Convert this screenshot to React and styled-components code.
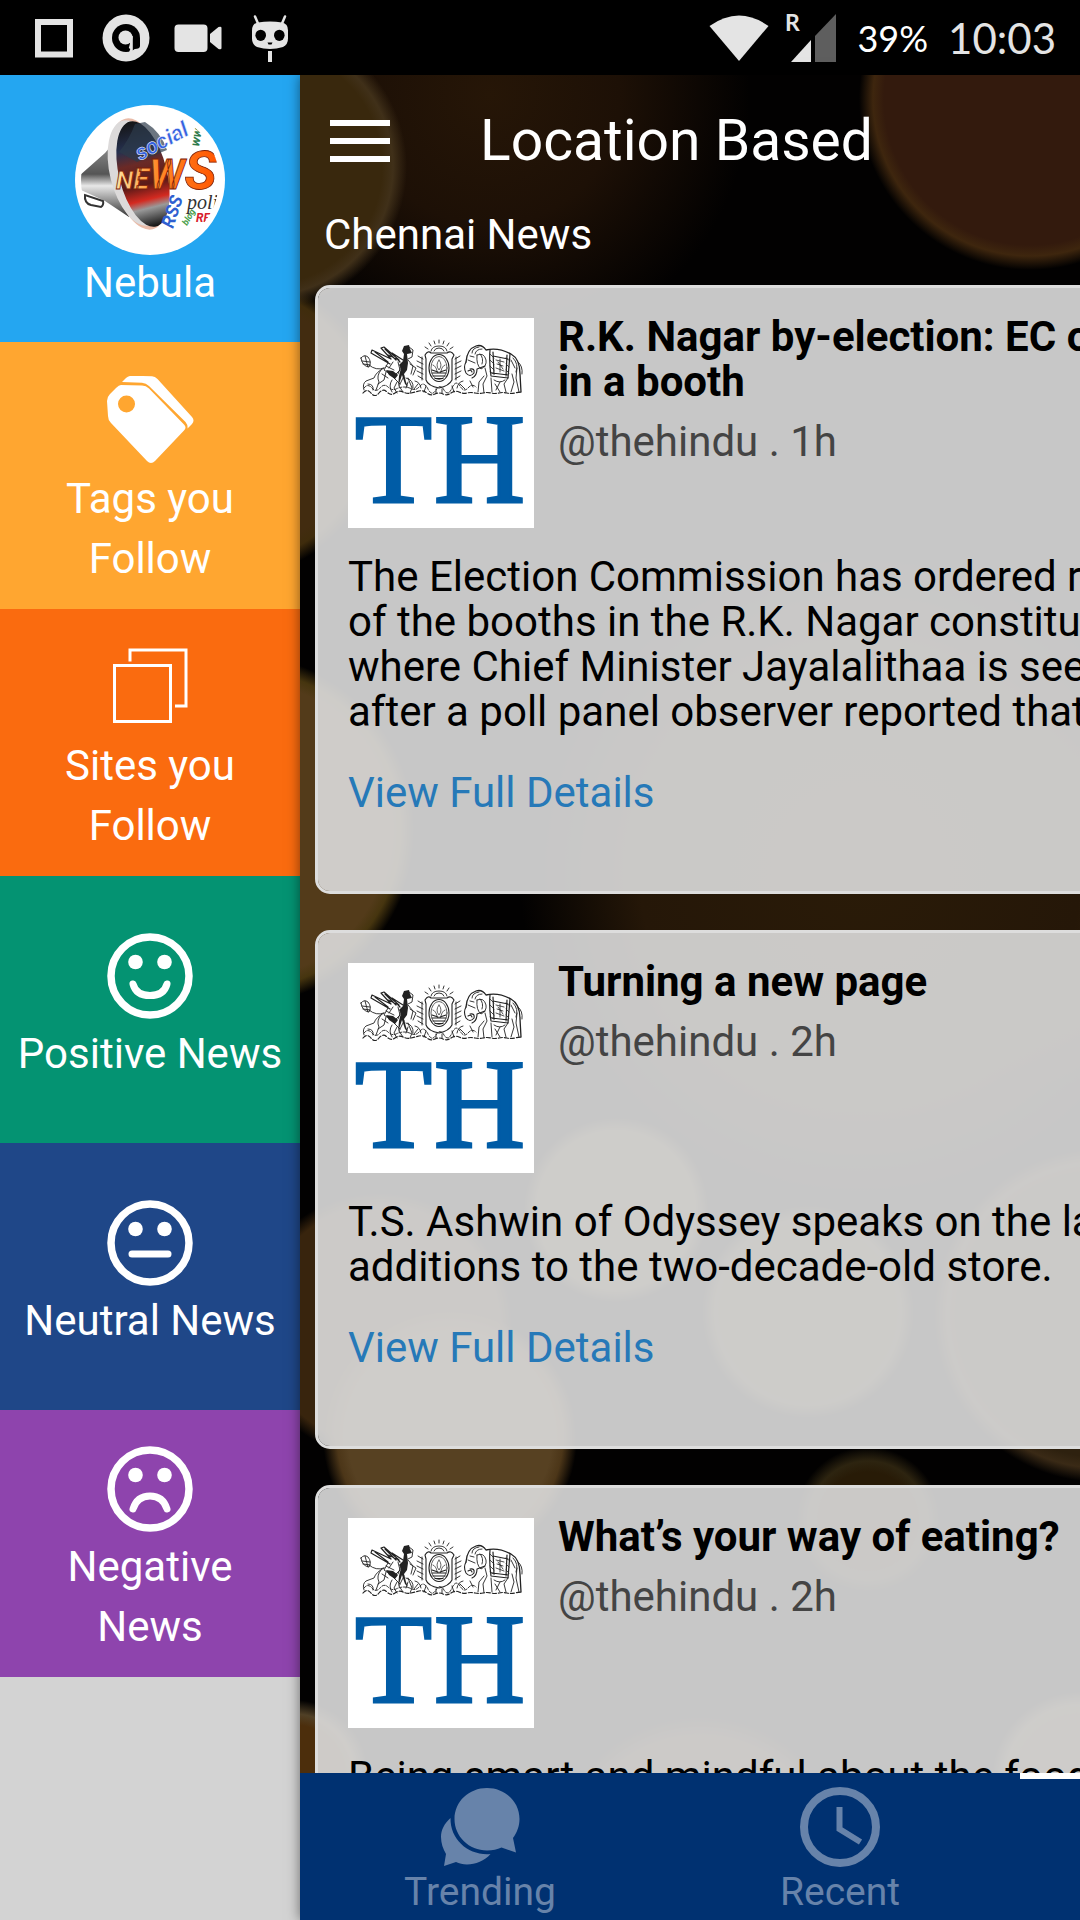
import React from 'react';
import styled, { createGlobalStyle, css } from 'styled-components';

const GlobalStyle = createGlobalStyle`
  *, *::before, *::after { box-sizing: border-box; }
  html, body { margin: 0; padding: 0; background: #000; }
  body { font-family: Roboto, "Noto Sans", sans-serif; font-size: 42px; overflow: hidden; }
  h1, h2, h3, p, ul { margin: 0; padding: 0; font-weight: 400; font-size: inherit; }
  ul { list-style: none; }
  button { font: inherit; border: 0; padding: 0; background: none; color: inherit; cursor: pointer; }
  a { text-decoration: none; color: inherit; }
  svg { display: block; flex: none; }
`;

const Screen = styled.div`
  display: flex;
  flex-direction: column;
  height: 100vh;
  overflow: hidden;
`;

/* ---------- status bar ---------- */

const StatusBar = styled.div`
  display: flex;
  flex: none;
  align-items: center;
  justify-content: space-between;
  height: 75px;
  padding: 0 24px 0 30px;
  background: #000;
  color: #e4e4e4;
  font-family: Lato, Roboto, sans-serif;
`;

const StatusGroup = styled.div`
  display: flex;
  align-items: center;
  gap: ${(p) => p.$gap}px;
`;

const Battery = styled.span`
  color: #fff;
  font-size: 36px;
  line-height: 48px;
`;

const Clock = styled.span`
  font-size: 42px;
  line-height: 48px;
`;

/* ---------- sidebar ---------- */

const Body = styled.div`
  display: flex;
  flex: 1;
  min-height: 0;
`;

const Sidebar = styled.nav`
  flex: none;
  width: 300px;
  background: #d3d3d3;
`;

const Tile = styled.button`
  display: flex;
  flex-direction: column;
  align-items: center;
  gap: ${(p) => (p.$avatar ? 0 : 3)}px;
  width: 100%;
  height: 267px;
  padding-top: ${(p) => p.$top}px;
  background: ${(p) => p.$color};
  color: #fff;
`;

const TileIcon = styled.span`
  height: ${(p) => (p.$avatar ? 148 : 90)}px;
`;

const TileLabel = styled.span`
  line-height: 60px;
  text-align: center;
  white-space: pre-line;
`;

/* ---------- main pane ---------- */

const disc = (x, y, r, fill, rim = fill) =>
  `radial-gradient(circle at ${x}px ${y}px, ${fill} 0, ${fill} ${r - 18}px, ${rim} ${r - 7}px, transparent ${r + 7}px)`;

const bokeh = [
  disc(-36, 92, 136, '#39280d', '#403019'),
  disc(730, 24, 164, '#331a0d', '#3e260e'),
  disc(-70, 350, 146, '#422c10', '#3f2c0c'),
  disc(-60, 755, 168, '#533b1a', '#46350f'),
  disc(316, 1135, 86, '#483c20', '#4c4124'),
  disc(508, 1237, 100, '#3c321a', '#42381f'),
  disc(150, 1362, 120, '#574122', '#4c3618'),
  disc(80, 1250, 126, '#38240d', '#38240d'),
  disc(568, 1445, 66, '#281b07', '#2d2410'),
  disc(800, 1240, 160, '#2e210f', '#3a2a16'),
  disc(-6, 1700, 68, '#4c2e0c', '#504026'),
  disc(780, 1705, 82, '#483a22', '#4c4028'),
  'radial-gradient(circle at 400px 1790px, #33200f 0, #33200f 130px, transparent 150px)',
  'radial-gradient(circle at 190px 20px, #261607 0, #1d1006 130px, transparent 260px)',
  'radial-gradient(circle at 560px 800px, #2a1b08 0, #251708 220px, transparent 340px)',
  'radial-gradient(circle at 760px 830px, #3c290c 0, #35240c 40px, transparent 180px)',
].join(', ');

const Main = styled.main`
  display: flex;
  flex: none;
  flex-direction: column;
  width: 100vw;
  background: ${bokeh}, #020101;
  box-shadow: 0 0 12px rgba(0, 0, 0, 0.5);
  color: #fff;
`;

const Header = styled.header`
  display: flex;
  flex: none;
  align-items: center;
  gap: 90px;
  height: 132px;
  padding: 0 30px;
`;

const MenuButton = styled.button`
  display: flex;
  flex-direction: column;
  gap: 12px;
  width: 60px;
`;

const Bar = styled.span`
  height: 6px;
  background: #fff;
`;

const Title = styled.h1`
  font-size: 57px;
  line-height: 66px;
`;

const Section = styled.section`
  display: flex;
  flex: 1;
  flex-direction: column;
  min-height: 0;
  overflow: hidden;
`;

const SectionTitle = styled.h2`
  flex: none;
  padding: 0 24px;
  line-height: 56px;
`;

const List = styled.ul`
  display: flex;
  flex-direction: column;
  gap: 36px;
  padding: 22px 15px;
`;

const Card = styled.li`
  flex: none;
  padding: 30px 30px 76px;
  border: 3px solid #dddddd;
  border-radius: 15px;
  background: rgba(221, 221, 221, 0.9);
  background-clip: padding-box;
  color: #000;
`;

const CardHead = styled.div`
  display: flex;
  gap: 24px;
  height: 210px;
`;

const Heading = styled.div`
  margin-top: -4px;
`;

const nowrapLines = css`
  line-height: 45px;
  white-space: pre;
`;

const Headline = styled.h3`
  ${nowrapLines}
  font-weight: 700;
`;

const Source = styled.p`
  margin-top: 15px;
  line-height: 45px;
  color: #444;
`;

const Summary = styled.p`
  ${nowrapLines}
  margin-top: 26px;
`;

const Details = styled.a`
  display: block;
  width: fit-content;
  margin-top: 36px;
  line-height: 45px;
  color: #2679b8;
`;

/* ---------- tab bar ---------- */

const TabBar = styled.nav`
  display: grid;
  flex: none;
  grid-template-columns: repeat(3, 1fr);
  height: 147px;
  background: #003171;
`;

const Tab = styled.button`
  display: flex;
  flex-direction: column;
  align-items: center;
  padding-top: 6px;
  border-top: 6px solid ${(p) => (p.$active ? '#fff' : 'transparent')};
  color: ${(p) => (p.$active ? '#fff' : '#6783aa')};
  font-size: 39px;
  line-height: 46px;
`;

/* ---------- drawings ---------- */

const RecentsSquare = () => (
  <svg width="48" height="48" viewBox="0 0 48 48" aria-hidden="true">
    <rect x="8" y="8" width="32" height="32.500" fill="none" stroke="#e4e4e4" strokeWidth="6" />
  </svg>
);

const AtIcon = () => (
  <svg width="48" height="48" viewBox="0 0 48 48" aria-hidden="true">
    <circle cx="24" cy="24" r="23.500" fill="#e4e4e4" />
    <circle cx="24" cy="24" r="14" fill="#000" />
    <path d="M31 24h7v8q0 3.500-7 3z" fill="#000" />
    <circle cx="23.500" cy="23.500" r="7" fill="#e4e4e4" />
    <path d="M28 22h2.800v17h-4l1.500-4-1.500-1 1.200-4.500z" fill="#e4e4e4" />
  </svg>
);

const VideoIcon = () => (
  <svg width="48" height="48" viewBox="0 0 48 48" fill="#e4e4e4" aria-hidden="true">
    <rect x="0.500" y="10.500" width="33" height="27.500" rx="4" />
    <path d="M36 20l8.500-7q3-1 3 1v20q0 2-3 1l-8.500-7z" />
  </svg>
);

const RobotIcon = () => (
  <svg width="48" height="48" viewBox="0 0 48 48" aria-hidden="true">
    <path d="M9 2.500l3 7M39 2.500l-3 7" stroke="#e4e4e4" strokeWidth="2.500" strokeLinecap="round" />
    <path d="M12 8.500Q24 6.500 36 8.500q6 1 6 8v8q0 6-5 8.500-13 4-26 0-5-2.500-5-8.500v-8q0-7 6-8z" fill="#e4e4e4" />
    <ellipse cx="14.700" cy="21.300" rx="5.300" ry="5.600" fill="#000" />
    <ellipse cx="33.300" cy="21.300" rx="5.300" ry="5.600" fill="#000" />
    <path d="M21.500 28.500h5l-1 2h-3z" fill="#000" />
    <rect x="22" y="37" width="4" height="11" fill="#e4e4e4" />
  </svg>
);

const WifiIcon = () => (
  <svg width="60" height="48" viewBox="0 0 60 48" aria-hidden="true">
    <path d="M30 47L0.500 12Q30-9 59.500 12z" fill="#e4e4e4" />
  </svg>
);

const SignalIcon = () => (
  <svg width="52" height="48" viewBox="0 0 52 48" overflow="visible" aria-hidden="true">
    <text x="0" y="17" fill="#e4e4e4" fontFamily="Lato, sans-serif" fontWeight="700" fontSize="23">R</text>
    <path d="M6 48l20-22v22z" fill="#e4e4e4" />
    <path d="M30 48V22L51 0v48z" fill="#5e5e5e" />
  </svg>
);

const Avatar = () => (
  <svg width="150" height="150" viewBox="0 0 150 150" role="img" aria-label="Social news megaphone">
    <defs>
      <clipPath id="avatarClip"><circle cx="75" cy="75" r="69" /></clipPath>
      <linearGradient id="cone" x1="0" y1="0" x2="0" y2="1">
        <stop offset="0" stopColor="#9a9a9a" />
        <stop offset="0.450" stopColor="#555" />
        <stop offset="0.600" stopColor="#e8e8e8" />
        <stop offset="1" stopColor="#333" />
      </linearGradient>
      <linearGradient id="inside" x1="0" y1="0" x2="0" y2="1">
        <stop offset="0" stopColor="#151515" />
        <stop offset="0.250" stopColor="#25304f" />
        <stop offset="0.400" stopColor="#6b2a26" />
        <stop offset="0.600" stopColor="#5c1a18" />
        <stop offset="0.740" stopColor="#d42a20" />
        <stop offset="0.820" stopColor="#999" />
        <stop offset="1" stopColor="#111" />
      </linearGradient>
      <linearGradient id="newsFill" x1="0" y1="0" x2="1" y2="0">
        <stop offset="0" stopColor="#ffe3a0" />
        <stop offset="0.400" stopColor="#ff8a2a" />
        <stop offset="1" stopColor="#ff5500" />
      </linearGradient>
    </defs>
    <circle cx="75" cy="75" r="75" fill="#fff" />
    <g clipPath="url(#avatarClip)">
      <path d="M42 34L30 48 4 71v13l26 12 24 16z" fill="url(#cone)" />
      <path d="M10 90q-1 8 6 10l10 2q3-2 2-6z" fill="#fff" stroke="#333" strokeWidth="2" />
      <ellipse cx="64" cy="69" rx="27" ry="57" transform="rotate(-14 64 69)" fill="#e9bba8" />
      <ellipse cx="61" cy="68" rx="26" ry="54" transform="rotate(-14 61 68)" fill="#dcdada" />
      <ellipse cx="68" cy="69" rx="24" ry="54" transform="rotate(-14 68 69)" fill="url(#inside)" />
      <path d="M70 17q16 10 22 28l-30 12-18-10q10-12 16-28z" fill="#2c3a4a" opacity="0.700" />
      <path d="M92 36l14-12 24 0 20 30v50l-42 4q-6-30-16-46z" fill="#fff" />
      <g fontFamily="Roboto, sans-serif" fontWeight="700" fontStyle="italic">
        <text transform="translate(65 56) rotate(-28)" fontSize="22" fill="#3461e0" stroke="#fff" strokeWidth="0.500">social</text>
        <text x="41" y="84" fill="url(#newsFill)" stroke="#7c2008" strokeWidth="0.800">
          <tspan fontSize="25">N</tspan>
          <tspan fontSize="29">E</tspan>
          <tspan fontSize="42">W</tspan>
          <tspan fontSize="54">S</tspan>
        </text>
        <text transform="translate(98 124) rotate(-72)" fontSize="18" fill="#2f5fd0">RSS</text>
        <text transform="translate(124 42) rotate(-80)" fontSize="13" fill="#2c7a4a">ww</text>
        <text transform="translate(112 121) rotate(-60)" fontSize="9" fill="#49a04a">blog</text>
        <text x="121" y="117" fontSize="12" fill="#d8202c">RE</text>
      </g>
      <text x="112" y="104" fontFamily="Liberation Serif, serif" fontStyle="italic" fontSize="20" fill="#333">poli</text>
    </g>
  </svg>
);

const TagsIcon = () => (
  <svg width="90" height="90" viewBox="0 0 90 90" fill="#fff" aria-hidden="true">
    <path fillRule="evenodd" d="M16 9l21 .5q4 0 7 3l35 36q3 3 0 6L50 85q-4 4-8 0L6 47q-3-3-3-7L2 25q0-4 3-7l6-6q3-3 5-3zM21.500 19.500a8.500 8.500 0 1 0 .01 17 8.500 8.500 0 1 0-.01-17z" />
    <path d="M17 6l4-4q3-2.500 7-2.300l19 .6q3 .2 5.500 2.700L87 41q3 3.500 0 7l-4.500 4.500q.5-3.500-2-6.500L44 10q-3-3-7-3.300z" />
  </svg>
);

const WindowsIcon = () => (
  <svg width="90" height="90" viewBox="0 0 90 90" fill="none" stroke="#fff" strokeWidth="3" aria-hidden="true">
    <rect x="9.500" y="22.500" width="56" height="56" />
    <path d="M25 18.500V7h56v56H70" />
  </svg>
);

const Mouths = {
  positive: <path d="M28 53Q31 64.500 45 64.500T62 53" />,
  neutral: <path d="M27 56H63" />,
  negative: <path d="M28 65Q32 52 45 52T62 65" />,
};

const FaceIcon = ({ mood }) => (
  <svg width="90" height="90" viewBox="0 0 90 90" aria-hidden="true">
    <circle cx="45" cy="45" r="39" fill="none" stroke="#fff" strokeWidth="7.500" />
    <circle cx="30.500" cy="31" r="7.300" fill="#fff" />
    <circle cx="59.500" cy="31" r="7.300" fill="#fff" />
    <g fill="none" stroke="#fff" strokeWidth="7" strokeLinecap="round">{Mouths[mood]}</g>
  </svg>
);

const HinduLogo = () => (
  <svg width="186" height="210" viewBox="0 0 186 210" role="img" aria-label="The Hindu">
    <rect width="186" height="210" fill="#fff" />
    <g fill="none" stroke="#222" strokeWidth="0.900" strokeLinejoin="round" strokeLinecap="round">
      {/* winged creature on the left */}
      <path d="M13 40Q16 36 20 39Q24 44 21 49Q14 48 13 40zM14 43L22 44M15 46L22 47M17 38L20 49M21 47Q28 53 36 50" />
      <path d="M42 46L23 35L24 32L43 41M43 41L33 30L36 29L51 42M51 42L40 37M27 34L40 44M37 31L48 42M52 44L44 35L55 42" strokeWidth="1.200" />
      <path d="M36 50Q28 54 26 60L18 63Q14 66 16 72M33 52Q28 58 31 64L28 72M38 54L36 62L30 66M44 62Q40 68 44 74M49 64L46 70L49 75M20 66Q26 66 25 72" />
      <path d="M40 45L36 52L42 56M45 44L41 50M50 44L52 52L46 58M54 46L50 56M38 48L46 52M34 56L40 60M44 58L52 66M56 58L51 68L55 74M60 60L64 70L62 75" />
      <path d="M61 29L65 32L64 39L60 41M60 42L65 48L63 56M62 46L68 50L65 57M58 60Q66 62 65 70" />
      {/* crest */}
      <path d="M77 37Q80 32 83 35L99 35Q103 32 106 37L104 41L104 62Q101 68 91 70Q80 68 78 62L78 41z" strokeWidth="1.100" />
      <ellipse cx="91" cy="50" rx="10" ry="13.500" strokeWidth="1.100" />
      <ellipse cx="91" cy="50" rx="8" ry="11.500" strokeWidth="0.700" />
      <path d="M84 52L90 54M98 52L92 54M84 55H98M85 58H97M87 60.500H95" strokeWidth="1.200" />
      <path d="M91 42Q87 47 91 52Q95 47 91 42M85 47Q88 48 89 53M97 47Q94 48 93 53" strokeWidth="0.700" />
      <path d="M83 33Q84 28 91 28T99 33M86 33Q87 30 91 30T96 33M91 25V22M87 26L86 23M95 26L96 23M83 28L81 25M99 28L101 25M80 31L77 29M102 31L105 29" />
      <path d="M75 41L70 38M75 46L69 43M75 51L69 48M75 56L69 53M75 61L70 58M107 41L112 38M107 46L113 43M107 51L113 48M107 56L113 53M107 61L112 58M74 39V62M108 39V62" />
      {/* elephant */}
      <path d="M118 44Q119 31 128 28Q134 26 138 32Q150 29 163 36Q172 41 172 56L173 74" strokeWidth="1.300" />
      <path d="M118 44Q115 49 118 55Q122 60 126 55Q127 50 122 51M120 53Q123 51 124 54M124 60Q129 58 129 51L137 48" strokeWidth="1.100" />
      <path d="M124 35Q124 30 131 29M127 36Q128 31 134 31M129 37Q136 34 138 42Q139 48 133 51Q128 47 129 37M120 42L127 45M122 38L126 39M132 36Q136 40 134 46" />
      <path d="M142 32Q141 44 143 58L160 60L162 36M145 34L146 56M159 37L158 58M145 38L160 41M144 55L160 57" strokeWidth="1.200" />
      <path d="M148 42L156 44M149 46L155 48M148 50L156 53M152 41V54M150 44L155 51M142 36L146 40M142 42L146 46M142 48L146 52M142 54L146 56M158 40L162 43M158 46L161 49M158 52L161 55" strokeWidth="0.800" />
      <path d="M137 50L139 58L135 66L136 75M143 60L144 74M136 58L131 64L130 74M160 60L156 66L158 74M164 56L166 64L163 74M169 50L168 60L171 74M146 62Q152 66 157 62" />
      <path d="M165 40Q171 46 168 54M163 42L167 50M170 44Q175 48 174 56M147 66L152 74M152 64L148 72" />
      {/* ground foliage */}
      <path d="M16 70Q20 65 24 70T32 70T40 69T48 71T56 69T64 71T72 68T80 71T88 72T96 72T104 70T112 68T120 70T128 69" strokeDasharray="3 1.500" />
      <path d="M15 75Q19 70 23 75T31 75T39 74T47 75T55 74T63 75T71 73T79 75T87 76T95 76T103 75T111 74T119 75T127 75T135 75T143 75T151 75T159 75T167 75T174 74" strokeWidth="1.200" strokeDasharray="4 2" />
      <path d="M67 63Q72 64 73 70M115 63Q110 64 109 70M78 68L76 74M104 68L106 74M88 71V75M94 71V75M70 66L66 71M112 66L117 71M60 64L58 70M122 63L125 69" />
    </g>
    <path d="M56 28L61 27L62 31L64 35L59 36L60 45L59 52L56 56L58 64L60 69L57 66L54 57L51 66L50 69L51 58L53 50L51 47L55 43L56 36L54 33z" fill="#222" />
    <path d="M38 52L45 53L50 57L47 61L41 57z" fill="#222" />
    <g fill="#005ca6" stroke="#005ca6" strokeWidth="3" fontFamily="Liberation Serif, serif" fontSize="126">
      <text x="7" y="184">T</text>
      <text x="86" y="184">H</text>
    </g>
  </svg>
);

const ChatIcon = () => (
  <svg width="84" height="84" viewBox="0 0 84 84" fill="#6783aa" aria-hidden="true">
    <path d="M49 3C31 3 16.500 16.500 16.500 34S31 65.500 49 65.500c6 0 10-1 14.500-3L78 67.500l-3-14.500c4-5.500 6.500-12 6.500-19C81.500 16.500 67 3 49 3z" />
    <path d="M12.500 33C6 39 3 45 3 52c0 6 2 12 5 17L6 81l12-4c10 5 26 2 34.500-8C31 71 12 55 12.500 33z" />
  </svg>
);

const ClockIcon = ({ color }) => (
  <svg width="84" height="84" viewBox="0 0 84 84" fill="none" stroke={color} strokeWidth="8" aria-hidden="true">
    <circle cx="42" cy="42" r="36" />
    <path d="M41.500 22v22l21 13" strokeWidth="6" />
  </svg>
);

const PinIcon = () => (
  <svg width="84" height="84" viewBox="0 0 84 84" fill="#fff" aria-hidden="true">
    <path d="M42 6C27 6 16 17 16 31c0 18 26 47 26 47s26-29 26-47C68 17 57 6 42 6zm0 35a10 10 0 1 1 0-20 10 10 0 0 1 0 20z" />
  </svg>
);

/* ---------- data ---------- */

const tiles = [
  { label: 'Nebula', color: '#24a6f1', top: 30, icon: <Avatar />, avatar: true },
  { label: 'Tags you\nFollow', color: '#ffa630', top: 34, icon: <TagsIcon /> },
  { label: 'Sites you\nFollow', color: '#fa6b0f', top: 34, icon: <WindowsIcon /> },
  { label: 'Positive News', color: '#049372', top: 55, icon: <FaceIcon mood="positive" /> },
  { label: 'Neutral News', color: '#1f4788', top: 55, icon: <FaceIcon mood="neutral" /> },
  { label: 'Negative\nNews', color: '#8e44ad', top: 34, icon: <FaceIcon mood="negative" /> },
];

const stories = [
  {
    title: 'R.K. Nagar by-election: EC orders repoll\nin a booth',
    age: '1h',
    summary:
      'The Election Commission has ordered repoll in one\nof the booths in the R.K. Nagar constituency\nwhere Chief Minister Jayalalithaa is seeking election\nafter a poll panel observer reported that',
  },
  {
    title: 'Turning a new page',
    age: '2h',
    summary: 'T.S. Ashwin of Odyssey speaks on the latest\nadditions to the two-decade-old store.',
  },
  {
    title: 'What’s your way of eating?',
    age: '2h',
    summary: 'Being smart and mindful about the food',
  },
];

export default function App() {
  return (
    <Screen>
      <GlobalStyle />
      <StatusBar>
        <StatusGroup $gap={24}>
          <RecentsSquare />
          <AtIcon />
          <VideoIcon />
          <RobotIcon />
        </StatusGroup>
        <StatusGroup $gap={20}>
          <StatusGroup $gap={16}>
            <WifiIcon />
            <SignalIcon />
          </StatusGroup>
          <Battery>39%</Battery>
          <Clock>10:03</Clock>
        </StatusGroup>
      </StatusBar>
      <Body>
        <Sidebar>
          {tiles.map((t) => (
            <Tile key={t.label} type="button" $color={t.color} $top={t.top} $avatar={t.avatar}>
              <TileIcon $avatar={t.avatar}>{t.icon}</TileIcon>
              <TileLabel>{t.label}</TileLabel>
            </Tile>
          ))}
        </Sidebar>
        <Main>
          <Header>
            <MenuButton type="button" aria-label="Menu">
              <Bar />
              <Bar />
              <Bar />
            </MenuButton>
            <Title>Location Based</Title>
          </Header>
          <Section>
            <SectionTitle>Chennai News</SectionTitle>
            <List>
              {stories.map((s) => (
                <Card key={s.title}>
                  <CardHead>
                    <HinduLogo />
                    <Heading>
                      <Headline>{s.title}</Headline>
                      <Source>@thehindu . {s.age}</Source>
                    </Heading>
                  </CardHead>
                  <Summary>{s.summary}</Summary>
                  <Details href="#details">View Full Details</Details>
                </Card>
              ))}
            </List>
          </Section>
          <TabBar>
            <Tab type="button">
              <ChatIcon />
              Trending
            </Tab>
            <Tab type="button">
              <ClockIcon color="#6783aa" />
              Recent
            </Tab>
            <Tab type="button" $active aria-label="Location">
              <PinIcon />
            </Tab>
          </TabBar>
        </Main>
      </Body>
    </Screen>
  );
}
